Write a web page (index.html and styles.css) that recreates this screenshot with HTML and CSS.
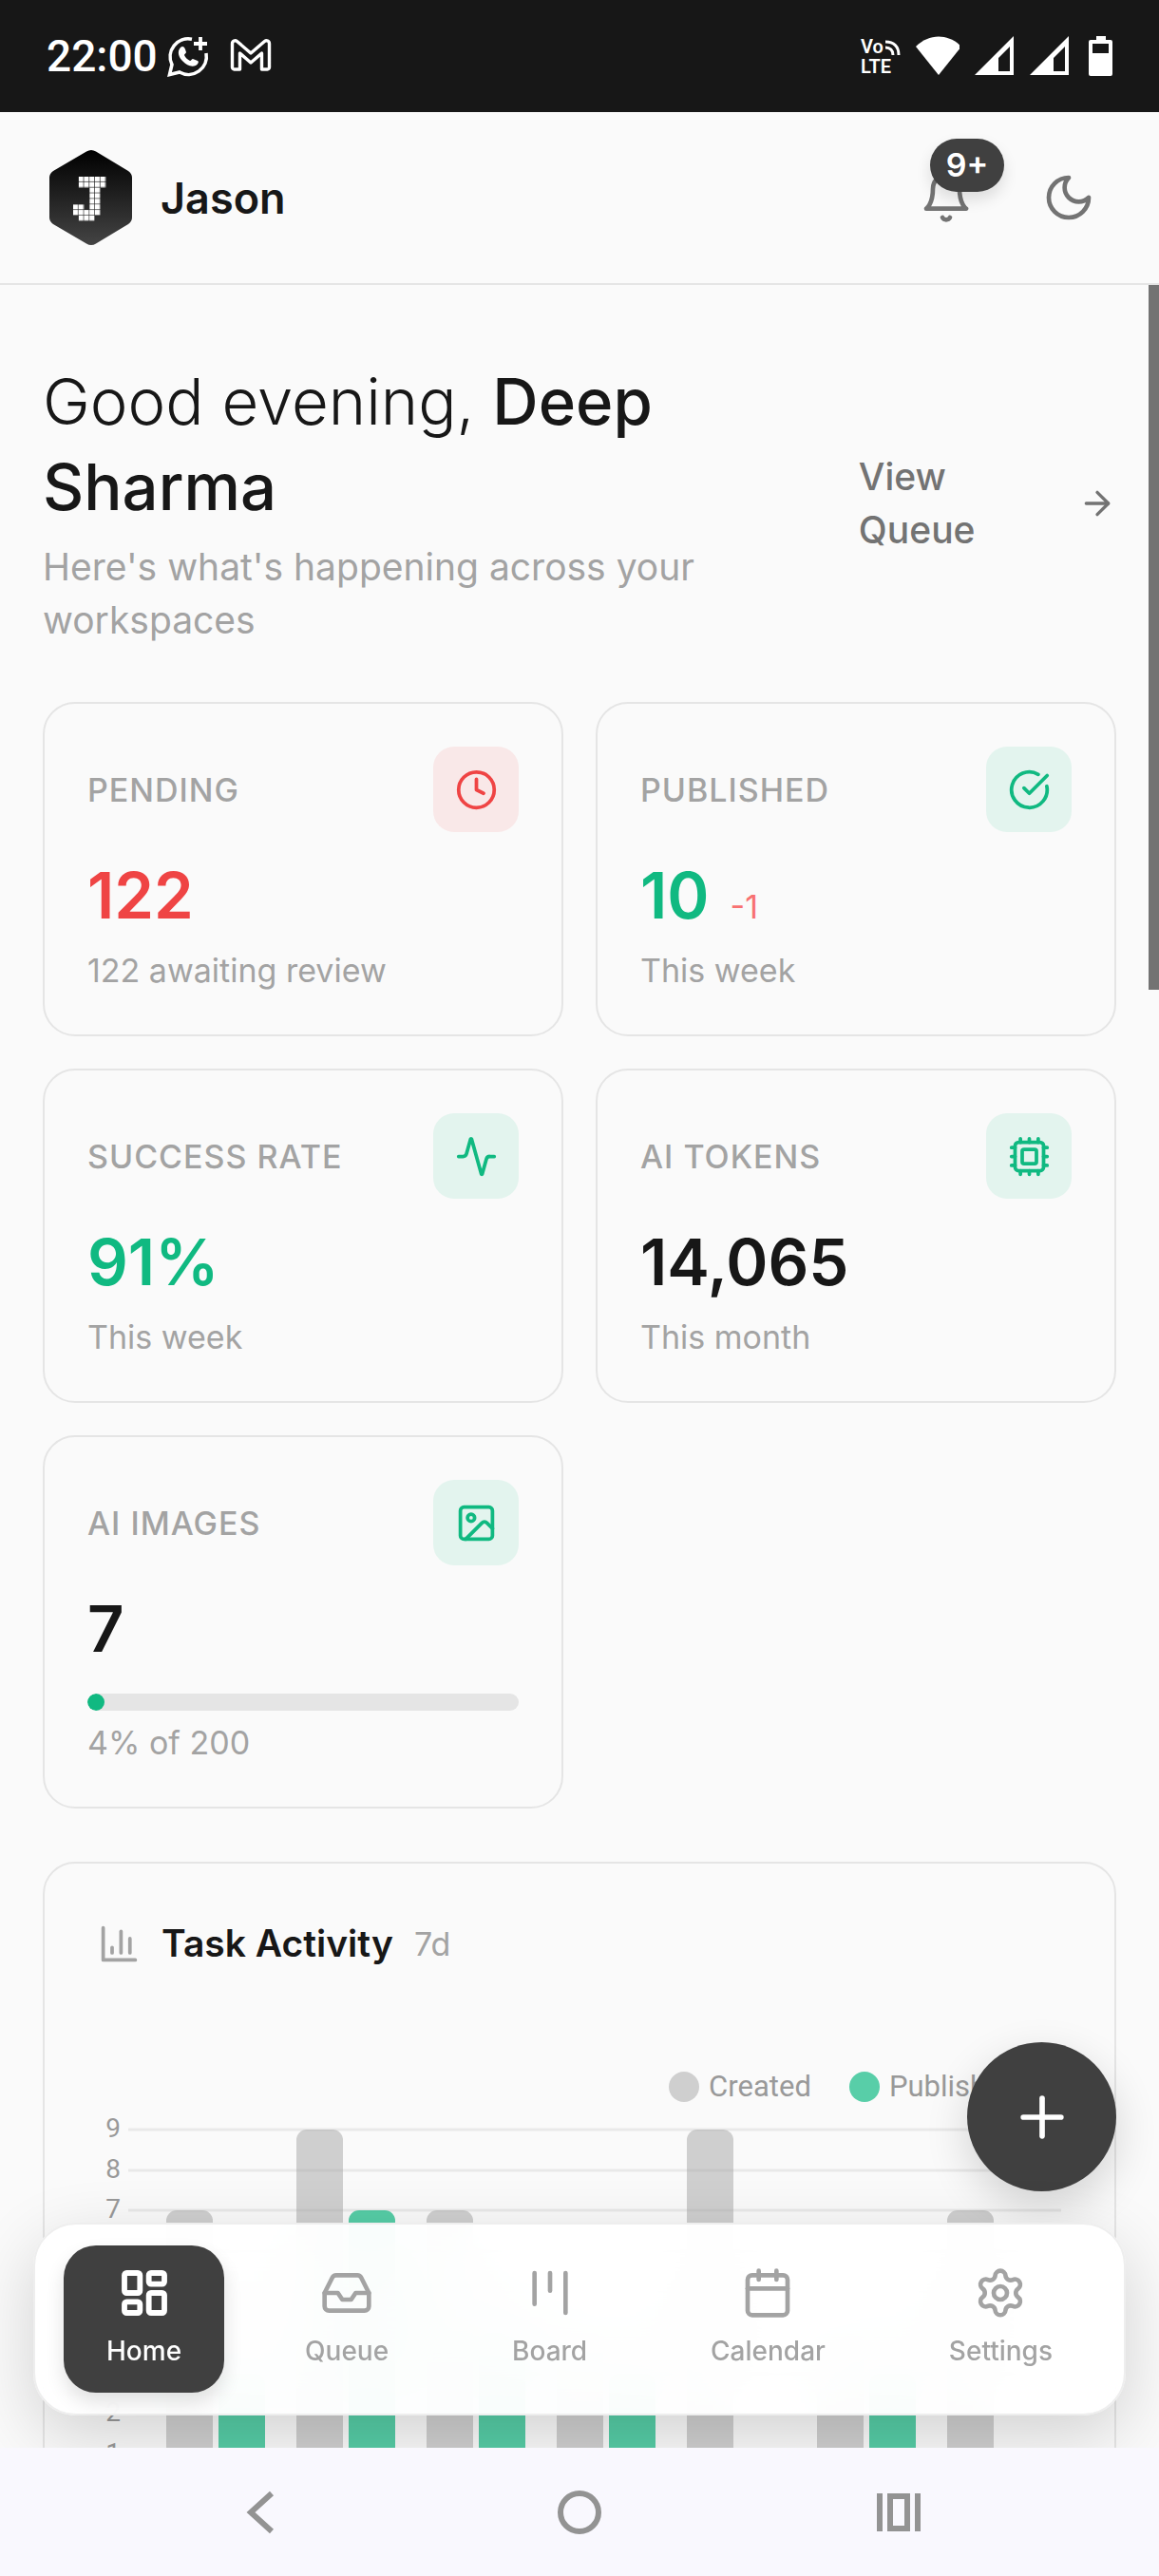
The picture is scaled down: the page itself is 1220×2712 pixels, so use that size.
FILE: index.html
```html
<!DOCTYPE html>
<html lang="en">
<head>
    <meta charset="UTF-8">
    <meta name="viewport" content="width=device-width, initial-scale=1.0">
    <title>Jason</title>
    <link rel="stylesheet" href="styles.css">
</head>
<body>

    <!-- Phone status bar -->
    <div class="status-bar">
        <span class="clock">22:00</span>
        <div class="status-notices">
            <svg width="44" height="44" viewBox="0 0 44 44" fill="none" stroke="#fff">
                <path d="M26 4.200A19 19 0 0 0 5 31L2.500 41.500L13 39A19 19 0 0 0 41 19" stroke-width="3.600"/>
                <path d="M35 2v14M28 9h14" stroke-width="3.800"/>
                <path d="M14 13c2-2 4-1 5 2l1 3c0 1-2 2-2 3 1 3 4 5 6 6 1 0 2-2 3-2l5 2c2 1 0 4-2 5-5 2-10-1-13-4-5-4-7-11-3-15z" fill="#fff" stroke="none"/>
            </svg>
            <svg width="44" height="44" viewBox="0 0 44 44" fill="none" stroke="#fff" stroke-width="3.400" stroke-linejoin="round">
                <path d="M2.500 34V9c0-3 3-4 5-2.500L22 19 36.500 6.500C38.500 5 41.500 6 41.500 9v25c0 1-1 2-2 2h-6V19L22 29 10.500 19v17h-6c-1 0-2-1-2-2z"/>
            </svg>
        </div>
        <div class="status-icons">
            <svg width="50" height="50" viewBox="0 -4 50 50" fill="none" stroke="#fff" stroke-width="3">
                <text class="volte" x="4" y="18">Vo</text>
                <text class="volte" x="4" y="39">LTE</text>
                <path d="M30 6c9 0 14 5 14 14M30 12c5 0 8 3 8 8"/>
            </svg>
            <svg width="50" height="50" viewBox="0 -4 50 50" fill="#fff"><path d="M4 11C18-3 38-3 52 11L28 41z"/></svg>
            <svg width="50" height="50" viewBox="0 -4 50 50" fill="#fff" fill-rule="evenodd"><path d="M49 0v41H8zM45 11L33 23v14h12z"/></svg>
            <svg width="50" height="50" viewBox="0 -4 50 50" fill="#fff" fill-rule="evenodd"><path d="M49 0v41H8zM45 11L33 23v14h12z"/></svg>
            <svg width="50" height="50" viewBox="0 -4 50 50" fill="#fff" fill-rule="evenodd"><path d="M20 0h10v4h5a2 2 0 0 1 2 2v34a2 2 0 0 1-2 2H14a2 2 0 0 1-2-2V6a2 2 0 0 1 2-2h6zM16 8v10h17V8z"/></svg>
        </div>
    </div>

    <!-- App header -->
    <header class="header">
        <a class="brand" href="#">
            <svg width="102" height="102" viewBox="0 0 102 102">
                <defs>
                    <linearGradient id="hex" x1="0" y1="0" x2="0" y2="1">
                        <stop offset="0" stop-color="#000"/>
                        <stop offset="1" stop-color="#444"/>
                    </linearGradient>
                    <pattern id="cell" x="32" y="29" width="5.750" height="5.850" patternUnits="userSpaceOnUse">
                        <rect width="5.100" height="5.200" fill="#fff"/>
                    </pattern>
                </defs>
                <path d="M46 2.500q5-3 10 0L90 23q4 3 4 7v42q0 4-4 7L56 99.500q-5 3-10 0L11 79q-4-3-4-7V30q0-4 4-7z" fill="url(#hex)"/>
                <path d="M37.750 29h28.750v11.700h-5.750v29.250h-5.750v5.850h-17.250v-5.850h-5.750v-11.700h11.500v5.850h5.750v-23.400h-11.500z" fill="url(#cell)"/>
            </svg>
            <span class="brand-name">Jason</span>
        </a>
        <div class="header-actions">
            <button class="icon-button" type="button" aria-label="Notifications">
                <svg class="icon" width="56" height="56" viewBox="0 0 24 24"><path d="M6 8a6 6 0 0 1 12 0c0 7 3 9 3 9H3s3-2 3-9"/><path d="M10.300 21a1.940 1.940 0 0 0 3.400 0"/></svg>
                <span class="badge">9+</span>
            </button>
            <button class="icon-button" type="button" aria-label="Dark mode">
                <svg class="icon" width="56" height="56" viewBox="0 0 24 24"><path d="M12 3a6 6 0 0 0 9 9 9 9 0 1 1-9-9Z"/></svg>
            </button>
        </div>
    </header>

    <div class="app">
        <main class="content">
            <section class="greeting">
                <div class="greeting-text">
                    <h1>Good evening, <strong>Deep Sharma</strong></h1>
                    <p>Here's what's happening across your workspaces</p>
                </div>
                <a class="queue-link" href="#">
                    <span>View Queue</span>
                    <svg class="icon" width="40" height="40" viewBox="0 0 24 24"><path d="M5 12h14"/><path d="m12 5 7 7-7 7"/></svg>
                </a>
            </section>

            <!-- Stat cards -->
            <section class="stats">
                <article class="card stat">
                    <div class="stat-head">
                        <h2>PENDING</h2>
                        <span class="stat-icon red"><svg class="icon" width="45" height="45" viewBox="0 0 24 24"><circle cx="12" cy="12" r="10"/><path d="M12 6v6l4 2"/></svg></span>
                    </div>
                    <div class="stat-value text-red">122</div>
                    <p class="stat-note">122 awaiting review</p>
                </article>
                <article class="card stat">
                    <div class="stat-head">
                        <h2>PUBLISHED</h2>
                        <span class="stat-icon"><svg class="icon" width="45" height="45" viewBox="0 0 24 24"><path d="M21.800 10A10 10 0 1 1 17 3.340"/><path d="m9 11 3 3L22 4"/></svg></span>
                    </div>
                    <div class="stat-value text-green">10<span class="delta">-1</span></div>
                    <p class="stat-note">This week</p>
                </article>
                <article class="card stat">
                    <div class="stat-head">
                        <h2>SUCCESS RATE</h2>
                        <span class="stat-icon"><svg class="icon" width="45" height="45" viewBox="0 0 24 24"><path d="M22 12h-2.480a2 2 0 0 0-1.930 1.460l-2.350 8.360a.25.25 0 0 1-.48 0L9.240 2.180a.25.25 0 0 0-.48 0l-2.350 8.360A2 2 0 0 1 4.490 12H2"/></svg></span>
                    </div>
                    <div class="stat-value text-green">91%</div>
                    <p class="stat-note">This week</p>
                </article>
                <article class="card stat">
                    <div class="stat-head">
                        <h2>AI TOKENS</h2>
                        <span class="stat-icon"><svg class="icon" width="45" height="45" viewBox="0 0 24 24"><rect x="4" y="4" width="16" height="16" rx="2"/><rect x="8" y="8" width="8" height="8" rx="1"/><path d="M12 20v2M12 2v2M17 20v2M17 2v2M2 12h2M2 17h2M2 7h2M20 12h2M20 17h2M20 7h2M7 20v2M7 2v2"/></svg></span>
                    </div>
                    <div class="stat-value">14,065</div>
                    <p class="stat-note">This month</p>
                </article>
                <article class="card stat">
                    <div class="stat-head">
                        <h2>AI IMAGES</h2>
                        <span class="stat-icon"><svg class="icon" width="45" height="45" viewBox="0 0 24 24"><rect x="3" y="3" width="18" height="18" rx="2"/><circle cx="9" cy="9" r="2"/><path d="m21 15-3.090-3.090a2 2 0 0 0-2.820 0L6 21"/></svg></span>
                    </div>
                    <div class="stat-value">7</div>
                    <div class="meter"><div class="meter-fill" style="width: 4%"></div></div>
                    <p class="stat-note">4% of 200</p>
                </article>
            </section>

            <!-- Task activity chart -->
            <section class="card activity">
                <div class="activity-head">
                    <svg class="icon" width="45" height="45" viewBox="0 0 24 24"><path d="M3 3v18h18"/><path d="M18 17V9"/><path d="M13 17V5"/><path d="M8 17v-3"/></svg>
                    <h2>Task Activity</h2>
                    <span>7d</span>
                </div>
                <ul class="legend">
                    <li><span class="dot"></span>Created</li>
                    <li><span class="dot dot-green"></span>Published</li>
                </ul>
                <svg class="chart" viewBox="0 0 1014 440">
                    <path class="grid" d="M32 27H1014M32 70H1014M32 112H1014M32 155H1014M32 198H1014M32 241H1014M32 284H1014M32 326H1014M32 369H1014M32 412H1014"/>
                    <g class="ticks">
                        <text x="24" y="35">9</text>
                        <text x="24" y="78">8</text>
                        <text x="24" y="120">7</text>
                        <text x="24" y="334">2</text>
                        <text x="24" y="377">1</text>
                    </g>
                    <g class="bars-created">
                        <path d="M72 412V123a11 11 0 0 1 11-11h27a11 11 0 0 1 11 11V412z"/>
                        <path d="M209 412V38a11 11 0 0 1 11-11h27a11 11 0 0 1 11 11V412z"/>
                        <path d="M346 412V123a11 11 0 0 1 11-11h27a11 11 0 0 1 11 11V412z"/>
                        <path d="M483 412V252a11 11 0 0 1 11-11h27a11 11 0 0 1 11 11V412z"/>
                        <path d="M620 412V38a11 11 0 0 1 11-11h27a11 11 0 0 1 11 11V412z"/>
                        <path d="M757 412V252a11 11 0 0 1 11-11h27a11 11 0 0 1 11 11V412z"/>
                        <path d="M894 412V123a11 11 0 0 1 11-11h27a11 11 0 0 1 11 11V412z"/>
                    </g>
                    <g class="bars-published">
                        <path d="M127 412V295a11 11 0 0 1 11-11h27a11 11 0 0 1 11 11V412z"/>
                        <path d="M264 412V123a11 11 0 0 1 11-11h27a11 11 0 0 1 11 11V412z"/>
                        <path d="M401 412V252a11 11 0 0 1 11-11h27a11 11 0 0 1 11 11V412z"/>
                        <path d="M538 412V295a11 11 0 0 1 11-11h27a11 11 0 0 1 11 11V412z"/>
                        <path d="M812 412V295a11 11 0 0 1 11-11h27a11 11 0 0 1 11 11V412z"/>
                    </g>
                </svg>
            </section>
        </main>

        <div class="scroll-thumb"></div>

        <button class="fab" type="button" aria-label="New task">
            <svg class="icon" width="68" height="68" viewBox="0 0 24 24"><path d="M5 12h14"/><path d="M12 5v14"/></svg>
        </button>

        <nav class="tabs">
            <a class="tab active" href="#">
                <svg class="icon" width="56" height="56" viewBox="0 0 24 24"><rect x="3" y="3" width="7" height="9" rx="1"/><rect x="14" y="3" width="7" height="5" rx="1"/><rect x="14" y="12" width="7" height="9" rx="1"/><rect x="3" y="16" width="7" height="5" rx="1"/></svg>
                Home
            </a>
            <a class="tab" href="#">
                <svg class="icon" width="56" height="56" viewBox="0 0 24 24"><path d="M22 12h-6l-2 3h-4l-2-3H2"/><path d="M5.450 5.110 2 12v6a2 2 0 0 0 2 2h16a2 2 0 0 0 2-2v-6l-3.450-6.890A2 2 0 0 0 16.760 4H7.240a2 2 0 0 0-1.790 1.110z"/></svg>
                Queue
            </a>
            <a class="tab" href="#">
                <svg class="icon" width="56" height="56" viewBox="0 0 24 24"><path d="M5 3v14"/><path d="M12 3v8"/><path d="M19 3v18"/></svg>
                Board
            </a>
            <a class="tab" href="#">
                <svg class="icon" width="56" height="56" viewBox="0 0 24 24"><path d="M8 2v4"/><path d="M16 2v4"/><rect x="3" y="4" width="18" height="18" rx="2"/><path d="M3 10h18"/></svg>
                Calendar
            </a>
            <a class="tab" href="#">
                <svg class="icon" width="56" height="56" viewBox="0 0 24 24"><path d="M9.671 4.136a2.340 2.340 0 0 1 4.659 0 2.340 2.340 0 0 0 3.319 1.915 2.340 2.340 0 0 1 2.330 4.033 2.340 2.340 0 0 0 0 3.831 2.340 2.340 0 0 1-2.330 4.033 2.340 2.340 0 0 0-3.319 1.915 2.340 2.340 0 0 1-4.659 0 2.340 2.340 0 0 0-3.320-1.915 2.340 2.340 0 0 1-2.330-4.033 2.340 2.340 0 0 0 0-3.831A2.340 2.340 0 0 1 6.350 6.051a2.340 2.340 0 0 0 3.319-1.915"/><circle cx="12" cy="12" r="3"/></svg>
                Settings
            </a>
        </nav>
    </div>

    <!-- Phone navigation keys -->
    <div class="system-nav">
        <button type="button" aria-label="Back"><svg width="48" height="48" viewBox="0 0 48 48"><path d="M36 4L14 24l22 20"/></svg></button>
        <button type="button" aria-label="Home screen"><svg width="48" height="48" viewBox="0 0 48 48"><circle cx="24" cy="24" r="20"/></svg></button>
        <button type="button" aria-label="Recent apps"><svg width="48" height="48" viewBox="0 0 48 48"><path d="M4 4v40M44 4v40M15 7h18v34H15z"/></svg></button>
    </div>

</body>
</html>
```
FILE: styles.css
```css
* {
    box-sizing: border-box;
}
body {
    display: flex;
    flex-direction: column;
    height: 100vh;
    margin: 0;
    background-color: #fafafa;
    color: #171717;
    font-family: Inter, "Liberation Sans", sans-serif;
    font-optical-sizing: none;
}
h1, h2, p, ul {
    margin: 0;
    padding: 0;
}
a {
    color: inherit;
    text-decoration: none;
}
button {
    padding: 0;
    border: none;
    background: none;
    font-family: inherit;
}
svg {
    display: block;
    flex-shrink: 0;
}
.icon {
    fill: none;
    stroke: currentColor;
    stroke-width: 2;
    stroke-linecap: round;
    stroke-linejoin: round;
}

/* Status bar */
.status-bar {
    display: flex;
    align-items: center;
    flex-shrink: 0;
    height: 118px;
    padding: 0 36px 0 49px;
    background-color: #171717;
    color: #fff;
    font-family: Roboto, sans-serif;
}
.clock {
    font-size: 46px;
    font-weight: 500;
}
.status-notices {
    display: flex;
    gap: 22px;
    margin-left: 10px;
}
.status-icons {
    display: flex;
    gap: 8px;
    margin-left: auto;
}
.volte {
    fill: #fff;
    stroke: none;
    font-size: 20px;
    font-weight: 600;
}

/* Header */
.header {
    display: flex;
    align-items: center;
    justify-content: space-between;
    flex-shrink: 0;
    height: 182px;
    padding: 0 45px;
    border-bottom: 2px solid #e5e5e5;
}
.brand {
    display: flex;
    align-items: center;
    gap: 22px;
}
.brand-name {
    font-size: 45px;
    font-weight: 600;
}
.header-actions {
    display: flex;
    gap: 28px;
}
.icon-button {
    position: relative;
    display: flex;
    align-items: center;
    justify-content: center;
    width: 101px;
    height: 101px;
    color: #737373;
}
.badge {
    position: absolute;
    top: -12px;
    right: -11px;
    width: 78px;
    border-radius: 28px;
    background-color: #404040;
    box-shadow: 0 8px 16px rgba(0, 0, 0, 0.12);
    color: #fff;
    font-size: 34px;
    font-weight: 600;
    line-height: 56px;
    text-align: center;
}

/* Scrolling page */
.app {
    position: relative;
    flex: 1;
    min-height: 0;
    overflow: hidden;
}
.content {
    height: 100%;
    padding: 78px 45px 0;
    overflow-y: auto;
    scrollbar-width: none;
}
.scroll-thumb {
    position: absolute;
    top: 0;
    right: 0;
    width: 11px;
    height: 742px;
    background-color: #737373;
}
.greeting {
    display: flex;
    align-items: center;
    justify-content: space-between;
    margin-bottom: 58px;
}
.greeting-text {
    width: 68%;
}
.greeting h1 {
    font-size: 67px;
    font-weight: 300;
    line-height: 90px;
}
.greeting strong {
    font-weight: 500;
}
.greeting p {
    margin-top: 11px;
    color: #a3a3a3;
    font-size: 39px;
    line-height: 56px;
}
.queue-link {
    display: flex;
    align-items: center;
    justify-content: space-between;
    width: 24%;
    color: #737373;
    font-size: 39px;
    font-weight: 500;
    line-height: 56px;
}
.queue-link span {
    width: min-content;
}

/* Cards */
.card {
    border: 2px solid #e5e5e5;
    border-radius: 34px;
}
.stats {
    display: grid;
    grid-template-columns: 1fr 1fr;
    gap: 34px;
    margin-bottom: 56px;
}
.stat {
    padding: 45px;
}
.stat-head {
    display: flex;
    align-items: center;
    justify-content: space-between;
    margin-bottom: 22px;
}
.stat-head h2 {
    color: #a3a3a3;
    font-size: 34px;
    font-weight: 500;
    letter-spacing: 1px;
}
.stat-icon {
    display: flex;
    align-items: center;
    justify-content: center;
    width: 90px;
    height: 90px;
    border-radius: 22px;
    background-color: #e3f4ee;
    color: #10b981;
}
.stat-icon.red {
    background-color: #f9e8e8;
    color: #ef4444;
}
.stat-value {
    display: flex;
    align-items: baseline;
    gap: 22px;
    font-size: 67px;
    font-weight: 600;
    line-height: 90px;
}
.text-red {
    color: #ef4444;
}
.text-green {
    color: #10b981;
}
.delta {
    color: #f87171;
    font-size: 34px;
    font-weight: 400;
    line-height: 45px;
}
.stat-note {
    margin-top: 11px;
    color: #a3a3a3;
    font-size: 34px;
    line-height: 45px;
}
.meter {
    height: 18px;
    margin-top: 23px;
    border-radius: 9px;
    background-color: #e5e5e5;
    overflow: hidden;
}
.meter-fill {
    height: 100%;
    border-radius: 9px;
    background-color: #10b981;
}

/* Task activity */
.activity {
    padding: 56px;
}
.activity-head {
    display: flex;
    align-items: center;
    gap: 22px;
    color: #a3a3a3;
    font-size: 34px;
}
.activity-head h2 {
    color: #171717;
    font-size: 39px;
    font-weight: 600;
    line-height: 56px;
}
.legend {
    display: flex;
    justify-content: flex-end;
    gap: 40px;
    margin-top: 105px;
    padding-right: 45px;
    color: #999;
    font-family: Roboto, sans-serif;
    font-size: 31px;
    line-height: 36px;
    list-style: none;
}
.legend li {
    display: flex;
    align-items: center;
    gap: 10px;
}
.dot {
    width: 32px;
    height: 32px;
    border-radius: 50%;
    background-color: #cfcfcf;
}
.dot-green {
    background-color: #58cea8;
}
.chart {
    width: 100%;
}
.grid {
    fill: none;
    stroke: #e9e9e9;
    stroke-width: 3;
}
.ticks {
    fill: #999;
    font-family: Roboto, sans-serif;
    font-size: 28px;
    text-anchor: end;
}
.bars-created {
    fill: rgba(163, 163, 163, 0.5);
}
.bars-published {
    fill: rgba(16, 185, 129, 0.7);
}

/* Floating button and tabs */
.fab {
    position: absolute;
    right: 45px;
    bottom: 270px;
    display: flex;
    align-items: center;
    justify-content: center;
    width: 157px;
    height: 157px;
    border-radius: 50%;
    background-color: #404040;
    box-shadow: 0 16px 45px rgba(0, 0, 0, 0.16);
    color: #fff;
}
.tabs {
    position: absolute;
    right: 35px;
    bottom: 34px;
    left: 35px;
    display: flex;
    justify-content: space-between;
    padding: 22px 30px;
    border: 2px solid #eee;
    border-radius: 45px;
    background-color: rgba(255, 255, 255, 0.95);
    box-shadow: 0 22px 70px rgba(0, 0, 0, 0.16);
    backdrop-filter: blur(45px);
}
.tab {
    display: flex;
    flex-direction: column;
    align-items: center;
    gap: 11px;
    padding: 22px 45px;
    border-radius: 34px;
    color: #a3a3a3;
    font-size: 28px;
    font-weight: 500;
    line-height: 44px;
}
.tab.active {
    background-color: #404040;
    box-shadow: 0 10px 20px rgba(0, 0, 0, 0.12);
    color: #fff;
}
.tab.active .icon {
    stroke-width: 2.5;
}

/* Phone keys */
.system-nav {
    display: flex;
    align-items: center;
    justify-content: center;
    gap: 288px;
    flex-shrink: 0;
    height: 135px;
    background-color: #f9f8fe;
}
.system-nav svg {
    fill: none;
    stroke: #939393;
    stroke-width: 6;
}
```
